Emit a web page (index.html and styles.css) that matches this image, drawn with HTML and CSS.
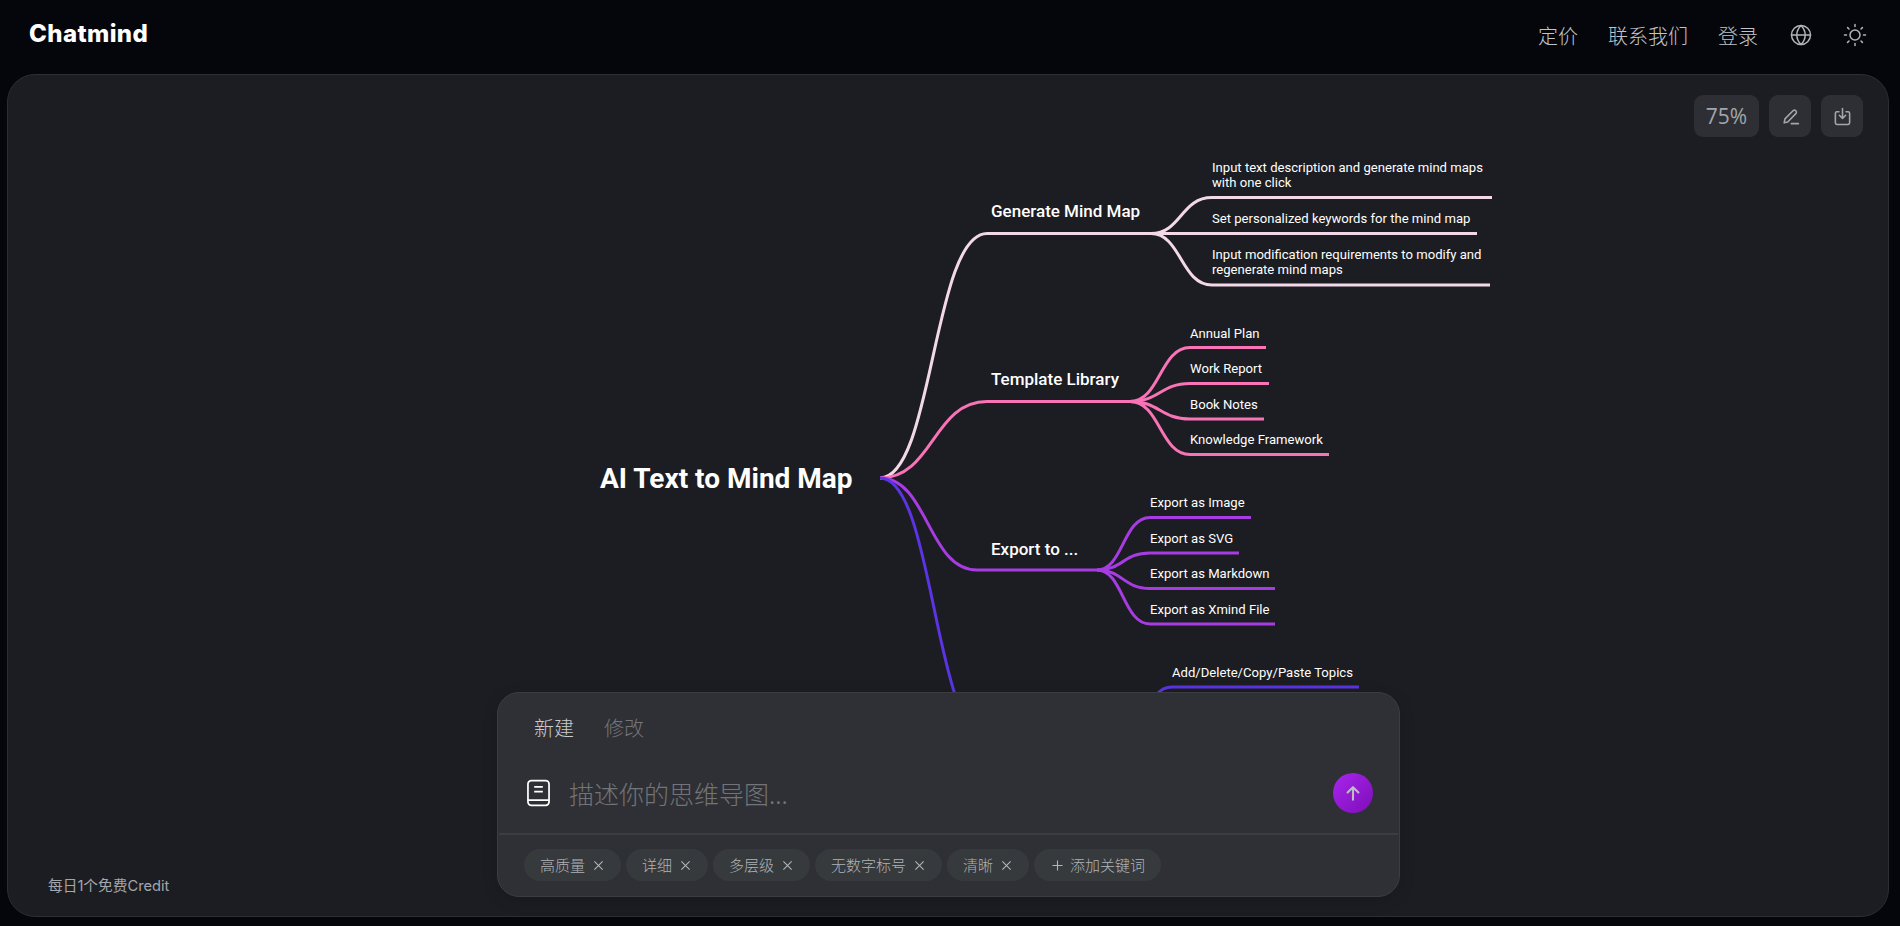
FILE: index.html
```html
<!DOCTYPE html>
<html lang="zh-CN">
  <head>
    <meta charset="UTF-8" />
    <meta name="viewport" content="width=device-width, initial-scale=1.0" />
    <title>Chatmind</title>
    <link rel="stylesheet" href="styles.css">
  </head>
  <body>
    <header class="topbar">
      <a class="logo">Chatmind</a>
      <nav class="nav">
        <a>定价</a>
        <a>联系我们</a>
        <a class="nav-last">登录</a>
        <svg class="nav-icon" viewBox="0 0 24 24"><circle cx="12" cy="12" r="9.5"/><path d="M2.5 12h19M12 2.5c-5.6 5.6-5.6 13.4 0 19M12 2.5c5.6 5.6 5.6 13.4 0 19"/></svg>
        <svg class="nav-icon" viewBox="0 0 24 24"><circle cx="12" cy="12" r="5"/><path d="M12 1.5v2M12 20.5v2M1.5 12h2M20.5 12h2M4.6 4.6l1.4 1.4M18 18l1.4 1.4M4.6 19.4L6 18M18 6l1.4-1.4"/></svg>
      </nav>
    </header>

    <main class="board">
      <svg class="map" width="1880" height="842">
        <g transform="translate(-8 -75)">
          <g class="branch" stroke="#f3d9e8">
            <path d="M880 478C933 478 933 233.500 987 233.500H1151"/>
            <path d="M1151 233.500C1181 233.500 1181 197.500 1212 197.500H1492"/>
            <path d="M1151 233.500H1477"/>
            <path d="M1151 233.500C1181 233.500 1181 285 1212 285H1490"/>
          </g>
          <g class="branch" stroke="#f973b7">
            <path d="M880 478C933 478 933 401.500 987 401.500H1130"/>
            <path d="M1130 401.500C1160 401.500 1160 347.500 1190 347.500H1266"/>
            <path d="M1130 401.500C1160 401.500 1160 383.500 1190 383.500H1269"/>
            <path d="M1130 401.500C1160 401.500 1160 419 1190 419H1264"/>
            <path d="M1130 401.500C1160 401.500 1160 454.500 1190 454.500H1329"/>
          </g>
          <g class="branch" stroke="#a73ce2">
            <path d="M880 478C928 478 928 570 977 570H1097"/>
            <path d="M1097 570C1123 570 1123 517.500 1150 517.500H1251"/>
            <path d="M1097 570C1123 570 1123 553 1150 553H1239"/>
            <path d="M1097 570C1123 570 1123 588.500 1150 588.500H1275"/>
            <path d="M1097 570C1123 570 1123 624 1150 624H1275"/>
          </g>
          <g class="branch" stroke="#5b34e3">
            <path d="M880 478C934 478 934 738 988 738H1118"/>
            <path d="M1118 738C1145 738 1145 687 1172 687H1359"/>
          </g>

          <text class="node-root" x="600" y="488">AI Text to Mind Map</text>

          <text class="node-main" x="991" y="217">Generate Mind Map</text>
          <text class="node-leaf" x="1212" y="172">Input text description and generate mind maps</text>
          <text class="node-leaf" x="1212" y="187">with one click</text>
          <text class="node-leaf" x="1212" y="223">Set personalized keywords for the mind map</text>
          <text class="node-leaf" x="1212" y="259">Input modification requirements to modify and</text>
          <text class="node-leaf" x="1212" y="274">regenerate mind maps</text>

          <text class="node-main" x="991" y="385">Template Library</text>
          <text class="node-leaf" x="1190" y="338">Annual Plan</text>
          <text class="node-leaf" x="1190" y="373">Work Report</text>
          <text class="node-leaf" x="1190" y="409">Book Notes</text>
          <text class="node-leaf" x="1190" y="444">Knowledge Framework</text>

          <text class="node-main" x="991" y="555">Export to ...</text>
          <text class="node-leaf" x="1150" y="507">Export as Image</text>
          <text class="node-leaf" x="1150" y="543">Export as SVG</text>
          <text class="node-leaf" x="1150" y="578">Export as Markdown</text>
          <text class="node-leaf" x="1150" y="614">Export as Xmind File</text>

          <text class="node-leaf" x="1172" y="677">Add/Delete/Copy/Paste Topics</text>
        </g>
      </svg>

      <div class="toolbar">
        <button class="tool tool-zoom">75%</button>
        <button class="tool">
          <svg class="tool-icon" viewBox="0 0 24 24"><path d="M4 20l1-5L15.500 4.500a2.500 2.500 0 0 1 3.500 3.500L8.500 19z"/><path d="M13 21h9"/></svg>
        </button>
        <button class="tool">
          <svg class="tool-icon" viewBox="0 0 24 24"><path d="M7.500 6H5a2 2 0 0 0-2 2v12a2 2 0 0 0 2 2h14a2 2 0 0 0 2-2V8a2 2 0 0 0-2-2h-2.500"/><path d="M12 2v12M8 10.500l4 4 4-4"/></svg>
        </button>
      </div>

      <div class="credit">每日1个免费Credit</div>

      <section class="prompt">
        <div class="tabs">
          <span class="tab tab-active">新建</span>
          <span class="tab">修改</span>
        </div>
        <div class="input-row">
          <svg class="book" viewBox="0 0 24 28"><rect x="1" y="1" width="22" height="26" rx="3.5"/><path d="M1 21.5h22M7.5 7.5h9M7.5 12.5h9"/></svg>
          <span class="placeholder">描述你的思维导图...</span>
          <button class="send">
            <svg viewBox="0 0 24 24"><path d="M12 20V5M5.500 11.500L12 5l6.500 6.500"/></svg>
          </button>
        </div>
        <div class="tags">
          <span class="tag">高质量<svg class="tag-x" viewBox="0 0 12 12"><path d="M1.500 1.500l9 9M10.500 1.500l-9 9"/></svg></span>
          <span class="tag">详细<svg class="tag-x" viewBox="0 0 12 12"><path d="M1.500 1.500l9 9M10.500 1.500l-9 9"/></svg></span>
          <span class="tag">多层级<svg class="tag-x" viewBox="0 0 12 12"><path d="M1.500 1.500l9 9M10.500 1.500l-9 9"/></svg></span>
          <span class="tag">无数字标号<svg class="tag-x" viewBox="0 0 12 12"><path d="M1.500 1.500l9 9M10.500 1.500l-9 9"/></svg></span>
          <span class="tag">清晰<svg class="tag-x" viewBox="0 0 12 12"><path d="M1.500 1.500l9 9M10.500 1.500l-9 9"/></svg></span>
          <span class="tag tag-add"><svg class="tag-plus" viewBox="0 0 12 12"><path d="M6 .5v11M.5 6h11"/></svg>添加关键词</span>
        </div>
      </section>
    </main>
  </body>
</html>
```

FILE: styles.css
```css
* {
  box-sizing: border-box;
}
html,
body {
  height: 100%;
}
body {
  margin: 0;
  display: flex;
  flex-direction: column;
  overflow: hidden;
  background: #05060b;
  color: #c0c3c8;
  font-family: Inter, "Noto Sans CJK SC", sans-serif;
}
.topbar {
  flex: 0 0 74px;
  display: flex;
  align-items: center;
  justify-content: space-between;
  padding: 0 33px 4px 29px;
}
.logo {
  margin-top: -3px;
  color: #fff;
  font-size: 24px;
  font-weight: 800;
  letter-spacing: 0.4px;
}
.nav {
  display: flex;
  align-items: center;
  gap: 30px;
  font-size: 20px;
  font-family: "Noto Sans CJK SC", sans-serif;
  font-weight: 300;
}
.nav-last {
  margin-right: 1px;
}
.nav-icon {
  width: 24px;
  height: 24px;
  fill: none;
  stroke: #b1b4ba;
  stroke-width: 1.500;
  stroke-linecap: round;
}
.board {
  position: relative;
  flex: 1;
  margin: 0 11px 9px 7px;
  overflow: hidden;
  background: #1c1d22;
  border: 1px solid #2c2e33;
  border-radius: 28px;
}
.map {
  display: block;
}
.branch path {
  fill: none;
  stroke-width: 3;
}
.map text {
  font-family: Roboto, sans-serif;
  fill: #fff;
}
.node-root {
  font-size: 28px;
  font-weight: 700;
}
.node-main {
  font-size: 17px;
  font-weight: 500;
}
.node-leaf {
  font-size: 13.1px;
}
.toolbar {
  position: absolute;
  top: 20px;
  right: 25px;
  display: flex;
  gap: 10px;
}
.tool {
  width: 42px;
  height: 42px;
  padding: 0;
  display: flex;
  align-items: center;
  justify-content: center;
  border: none;
  border-radius: 9px;
  background: #2e2f34;
  color: #a3a6ab;
}
.tool-zoom {
  width: 65px;
  font-family: "Open Sans", sans-serif;
  font-size: 21px;
}
.tool-icon {
  width: 19px;
  height: 19px;
  fill: none;
  stroke: #a3a6ab;
  stroke-width: 2;
  stroke-linecap: round;
  stroke-linejoin: round;
}
.credit {
  position: absolute;
  left: 40px;
  bottom: 21px;
  font-size: 14.700px;
  color: #a3a6ab;
}
.prompt {
  position: absolute;
  left: 489px;
  bottom: 19px;
  width: 903px;
  height: 205px;
  display: flex;
  flex-direction: column;
  background: #2f3035;
  border: 1px solid #3c3d42;
  border-radius: 22px;
  box-shadow: 0 4px 16px rgba(0, 0, 0, 0.15);
}
.tabs {
  display: flex;
  gap: 30px;
  padding: 20px 0 11px 36px;
  font-family: "Noto Sans CJK SC", sans-serif;
  font-size: 20px;
  font-weight: 300;
  line-height: 29px;
}
.tab {
  color: #74767b;
}
.tab-active {
  color: #c8cace;
}
.input-row {
  flex: 1;
  display: flex;
  align-items: center;
  margin: 0 1px;
  padding: 0 25px 0 28px;
  border-bottom: 2px solid #3c3d42;
}
.book {
  flex: none;
  width: 23px;
  height: 28px;
  margin-right: 19px;
  fill: none;
  stroke: #fff;
  stroke-width: 1.800;
}
.placeholder {
  flex: 1;
  color: #727478;
  font-family: "Noto Sans CJK SC", sans-serif;
  font-size: 25px;
  font-weight: 300;
}
.send {
  width: 40px;
  height: 40px;
  padding: 0;
  display: flex;
  align-items: center;
  justify-content: center;
  border: none;
  border-radius: 50%;
  background: linear-gradient(135deg, #a726ec, #7e0db8);
}
.send svg {
  width: 20px;
  height: 20px;
  fill: none;
  stroke: #bdbdc6;
  stroke-width: 2.500;
  stroke-linecap: round;
  stroke-linejoin: round;
}
.tags {
  display: flex;
  gap: 5px;
  padding: 14px 26px 15px;
}
.tag {
  height: 32px;
  display: flex;
  align-items: center;
  padding: 0 17px 2px 16px;
  border-radius: 16px;
  background: #363a3d;
  color: #b0b3b8;
  font-family: "Noto Sans CJK SC", sans-serif;
  font-size: 15px;
  font-weight: 300;
}
.tag-x {
  width: 11px;
  height: 11px;
  margin-left: 8px;
  margin-top: 2px;
  fill: none;
  stroke: #b0b3b8;
  stroke-width: 1.200;
}
.tag-add {
  padding: 0 16px 2px 18px;
}
.tag-plus {
  width: 11px;
  height: 11px;
  margin-right: 7px;
  margin-top: 2px;
  fill: none;
  stroke: #b0b3b8;
  stroke-width: 1.200;
}
```
